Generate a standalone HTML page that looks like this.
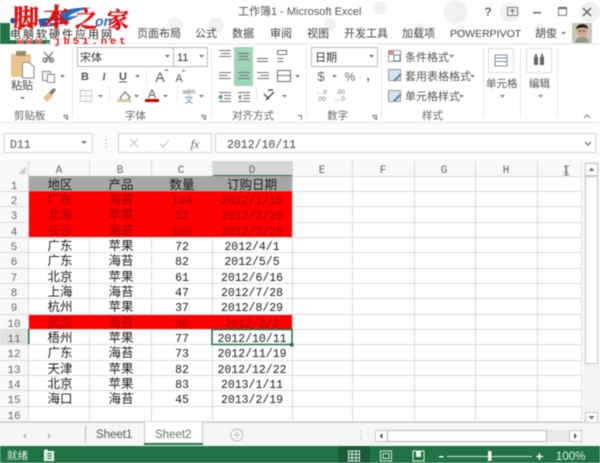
<!DOCTYPE html>
<html><head><meta charset="utf-8"><style>
html,body{margin:0;padding:0;width:600px;height:463px;overflow:hidden;background:#fff}
svg{display:block;filter:blur(.45px)}
text{font-family:"Liberation Sans","Noto Sans CJK SC",sans-serif;fill:#444;font-size:11px}
.t{font-size:11px;fill:#555}
.c{font-size:12.5px;fill:#1c1c1c;text-anchor:middle;font-family:"Liberation Mono","Noto Sans CJK SC",monospace}
.n{font-size:11.5px;fill:#1c1c1c;text-anchor:middle;font-family:"Liberation Mono","Noto Sans CJK SC",monospace}
.r{fill:#a00000}
.h{font-size:11px;fill:#666;text-anchor:middle;font-family:"Liberation Mono",monospace}
.m{text-anchor:middle}
.l{fill:none;stroke:#777;stroke-width:1}
.w{font-family:'Noto Serif CJK SC',serif;font-weight:700;fill:#e01010;stroke:#e01010;stroke-width:.5px}
</style></head><body>
<svg width="600" height="463" viewBox="0 0 600 463" xmlns="http://www.w3.org/2000/svg">
<rect width="600" height="463" fill="#fff"/>
<!-- title skull pattern -->
<g fill="#f1f1f1">
<circle cx="216" cy="25" r="8"/><circle cx="455" cy="12" r="12"/><circle cx="510" cy="12" r="10"/><circle cx="590" cy="12" r="10"/><circle cx="380" cy="8" r="7"/><circle cx="420" cy="28" r="5"/><circle cx="175" cy="25" r="8"/><circle cx="460" cy="30" r="5"/><circle cx="540" cy="28" r="5"/><circle cx="330" cy="24" r="6"/>
</g>
<!-- file tab -->
<rect x="0" y="23" width="50" height="21" fill="#217346"/>
<rect x="10" y="23" width="40" height="17" fill="#fff"/>
<rect x="50" y="43.500" width="550" height="1" fill="#e2e2e2"/>
<!-- tabs -->
<g class="t">
<text x="137" y="37">页面布局</text><text x="195" y="37">公式</text><text x="232" y="37">数据</text><text x="270" y="37">审阅</text><text x="307" y="37">视图</text><text x="344" y="37">开发工具</text><text x="402" y="37">加载项</text><text x="450" y="37" style="font-size:10.500px">POWERPIVOT</text><text x="535" y="37">胡俊</text>
</g>
<path d="M561 32h5l-2.500 2.500z" fill="#777"/>
<!-- avatar -->
<rect x="572" y="23" width="20" height="20" fill="#c9c5bb"/>
<path d="M575 43c1-5 3-6 7-6s6 1 7 6z" fill="#8d9a86"/>
<circle cx="582" cy="31" r="5.500" fill="#d3a98a"/>
<path d="M576 29c0-6 12-7 12 0-3-2-8-2-12 0z" fill="#222"/>
<path d="M579 31h2M583 31h2" stroke="#222"/>
<!-- title -->
<text x="238" y="15" style="font-size:11px;fill:#555">工作簿1 - Microsoft Excel</text>
<text x="488" y="16" class="m" style="font-size:12px;font-weight:bold;fill:#666">?</text>
<rect x="507.500" y="7.500" width="10" height="8" class="l"/><path d="M512.500 14v-4M510.500 11.500l2-2 2 2" class="l"/>
<rect x="533" y="12" width="8" height="1.500" fill="#666"/>
<rect x="558.500" y="7.500" width="8" height="8" class="l"/><rect x="558" y="7" width="9" height="2" fill="#666"/>
<path d="M583 8l8 8M591 8l-8 8" stroke="#666" stroke-width="1.500"/>
<!-- ribbon separators -->
<g stroke="#e6e6e6">
<path d="M72.500 47v71M211.500 47v71M306.500 47v71M381.500 47v71M483.500 47v71M520.500 47v71M557.500 47v71"/>
<path d="M146.500 71v15M109.500 86v15M177.500 86v15M256.500 86v15"/>
</g>
<!-- clipboard -->
<rect x="11" y="54" width="20" height="23" rx="1" fill="#e9c58d"/>
<rect x="16" y="51" width="10" height="5" fill="#9a8a6e"/>
<path d="M22.500 62.500h7l4.500 4.500v11h-11.500z" fill="#fff" stroke="#888"/>
<text x="11" y="89" style="font-size:11px">粘贴</text>
<path d="M20 97h5l-2.500 2.500z" fill="#777"/>
<path d="M44 52l8 9M53 52l-8 9" stroke="#666" stroke-width="1.200"/><circle cx="45" cy="60" r="2.200" fill="none" stroke="#555"/><circle cx="51.500" cy="60" r="2.200" fill="none" stroke="#555"/>
<rect x="42.500" y="71.500" width="8" height="9" fill="#f6f6f6" stroke="#8a8a8a"/><rect x="47.500" y="74.500" width="7" height="8" fill="#fff" stroke="#8a8a8a"/>
<path d="M60 75h5l-2.500 2.500z" fill="#777"/>
<path d="M43 98l6-6 4 4-6 6z" fill="#e3c488"/><path d="M49 92l5-4 2 2-4 5z" fill="#7a7a7a"/>
<text x="14" y="119" style="font-size:10.500px;fill:#666">剪贴板</text>
<path d="M63 115.500h4.500v4.500M64 116.500l3 3" class="l" stroke-width=".8"/>
<!-- font -->
<rect x="77.500" y="47.500" width="96" height="19" fill="#fff" stroke="#b5b5b5"/>
<rect x="173.500" y="47.500" width="34" height="19" fill="#fff" stroke="#b5b5b5"/>
<text x="80" y="61" style="font-size:11px;fill:#333">宋体</text>
<text x="177" y="61" style="font-size:11px;fill:#333">11</text>
<path d="M165 55h5l-2.500 2.500zM199 55h5l-2.500 2.500z" fill="#666"/>
<text x="85" y="80" class="m" style="font-size:11px;font-weight:bold;fill:#555">B</text>
<text x="104" y="80" class="m" style="font-size:11px;font-style:italic;font-family:'Liberation Serif',serif;font-weight:bold;fill:#666">I</text>
<text x="123" y="80" class="m" style="font-size:11px;font-weight:bold;fill:#555">U</text>
<rect x="119" y="81.500" width="8" height="1" fill="#555"/>
<path d="M135 75h5l-2.500 2.500z" fill="#777"/>
<text x="160" y="82" class="m" style="font-size:14px;fill:#555">A</text><text x="179" y="82" class="m" style="font-size:11px;fill:#555">A</text>
<path d="M165 71l1.500-1.500 1.500 1.500M182 70l1.500 1.500 1.500-1.500" class="l"/>
<path d="M80.500 90.500h11v11h-11zM86 90.500v11M80.500 96h11" fill="none" stroke="#aaa" stroke-dasharray="1.500 1"/>
<path d="M98 95h5l-2.500 2.500z" fill="#777"/>
<path d="M120 98l5-6 5 5-3 3h-5z" fill="#fff" stroke="#666"/><rect x="117" y="99" width="14" height="3" fill="#cfc8a0"/>
<path d="M134 95h5l-2.500 2.500z" fill="#777"/>
<text x="152" y="98" class="m" style="font-size:12px;fill:#555">A</text><rect x="145" y="99" width="14" height="3" fill="#c00000"/>
<path d="M163 95h5l-2.500 2.500z" fill="#777"/>
<text x="189" y="94" class="m" style="font-size:7px;fill:#666">wén</text><text x="189" y="103" class="m" style="font-size:9px;fill:#5a7fa8">文</text>
<path d="M199 95h5l-2.500 2.500z" fill="#777"/>
<text x="125" y="119" style="font-size:10.500px;fill:#666">字体</text>
<path d="M201 115.500h4.500v4.500M202 116.500l3 3" class="l" stroke-width=".8"/>
<!-- alignment -->
<rect x="234" y="47" width="19" height="39" fill="#9fd4b6"/>
<g stroke="#6f6f6f" fill="none">
<path d="M219 50.500h12M221 53.500h9M219 56.500h12"/>
<path d="M238 53.500h11M239 56.500h9M238 59.500h11"/>
<path d="M257 58.500h11M257 61.500h11"/>
<path d="M219 72.500h12M219 75.500h9M219 78.500h12"/>
<path d="M238 72.500h12M240 75.500h8M238 78.500h12"/>
<path d="M257 72.500h12M260 75.500h9M257 78.500h12"/>
<path d="M219 92.500h12M224 95.500h7M224 98.500h7M219 101.500h12"/>
<path d="M238 92.500h12M243 95.500h7M243 98.500h7M238 101.500h12"/>
<path d="M277.500 50.500h9v4h-9zM277.500 58.500h6M277.500 61.500h6"/>
<path d="M277.500 70.500h13v11h-13zM277.500 75.500h13"/>
</g>
<path d="M218 97l4-3v6zM241 94v6l-3-3z" fill="#5a85ad"/>
<path d="M295 75h5l-2.500 2.500zM282 95h5l-2.500 2.500z" fill="#777"/>
<path d="M266 100l8-8M268 90l5 0M264 94l5 5" stroke="#555" fill="none" stroke-width="1.500"/>
<text x="232" y="119" style="font-size:10.500px;fill:#666">对齐方式</text>
<path d="M298 115.500h3.500v4.500" class="l" stroke-width=".8"/>
<!-- number -->
<rect x="311.500" y="47.500" width="66" height="19" fill="#fff" stroke="#b5b5b5"/>
<text x="315" y="61" style="font-size:11px;fill:#333">日期</text>
<path d="M369 55h5l-2.500 2.500z" fill="#666"/>
<text x="321" y="81" class="m" style="font-size:13px;fill:#666">$</text>
<path d="M332 75h5l-2.500 2.500z" fill="#777"/>
<text x="350" y="81" class="m" style="font-size:12px;fill:#666">%</text>
<text x="368" y="80" class="m" style="font-size:12px;font-weight:bold;fill:#555">,</text>
<text x="315" y="94" style="font-size:6.500px;fill:#777">←.0</text><text x="317" y="101" style="font-size:6.500px;fill:#777">.00</text>
<text x="336" y="94" style="font-size:6.500px;fill:#777">.00</text><text x="333" y="101" style="font-size:6.500px;fill:#777">→.0</text>
<text x="327" y="119" style="font-size:10.500px;fill:#666">数字</text>
<path d="M372 115.500h4.500v4.500M373 116.500l3 3" class="l" stroke-width=".8"/>
<!-- styles -->
<rect x="388.500" y="50.500" width="12" height="11" fill="#fff" stroke="#9a9a9a"/><rect x="389" y="51" width="5" height="4" fill="#d48a8a"/><rect x="394" y="55" width="6" height="6" fill="#fff" stroke="#5a7fa8"/>
<rect x="388.500" y="69.500" width="12" height="11" fill="#d7e4ef" stroke="#9a9a9a"/><path d="M394 81l7-7" stroke="#5a85ad" stroke-width="2"/>
<rect x="388.500" y="90.500" width="12" height="11" fill="#d7e4ef" stroke="#9a9a9a"/><path d="M394 101l7-7" stroke="#5a85ad" stroke-width="2"/>
<text x="405" y="61" style="font-size:11px;fill:#555">条件格式</text>
<text x="405" y="80" style="font-size:11px;fill:#555">套用表格格式</text>
<text x="405" y="100" style="font-size:11px;fill:#555">单元格样式</text>
<path d="M449 55h5l-2.500 2.500zM470 75h5l-2.500 2.500zM459 95h5l-2.500 2.500z" fill="#777"/>
<text x="422" y="119" style="font-size:10.500px;fill:#666">样式</text>
<!-- cells/edit -->
<rect x="488.500" y="48.500" width="25" height="24" fill="#fff" stroke="#dcdcdc"/>
<rect x="526.500" y="48.500" width="25" height="24" fill="#fff" stroke="#dcdcdc"/>
<path d="M495 55h12v11h-12zM495 58h12M495 61.500h12" fill="none" stroke="#7b8da0"/>
<rect x="534" y="57" width="4" height="8" fill="#666"/><rect x="540" y="57" width="4" height="8" fill="#666"/><rect x="535" y="54" width="2" height="4" fill="#666"/><rect x="541" y="54" width="2" height="4" fill="#666"/>
<text x="486" y="87" style="font-size:10.500px;fill:#555">单元格</text>
<text x="529" y="87" style="font-size:10.500px;fill:#555">编辑</text>
<path d="M500 95h5l-2.500 2.500zM538 95h5l-2.500 2.500z" fill="#777"/>
<path d="M584 118l3-3 3 3" class="l"/>
<rect x="0" y="122" width="600" height="1" fill="#e2e2e2"/>
<!-- formula bar -->
<rect x="0" y="123" width="600" height="38" fill="#fbfbfb"/>
<rect x="4.500" y="133.500" width="88" height="19" fill="#fff" stroke="#d2d2d2"/>
<rect x="118.500" y="133.500" width="93" height="19" fill="#fff" stroke="#d2d2d2"/>
<rect x="215.500" y="133.500" width="380" height="19" fill="#fff" stroke="#d2d2d2"/>
<text x="10" y="148" style="font-family:'Liberation Mono',monospace;font-size:11.500px;fill:#555">D11</text>
<path d="M81 141h6l-3 3z" fill="#777"/>
<path d="M106 139.500v1M106 143v1M106 146.500v1" stroke="#888"/>
<path d="M130 139l8 8M138 139l-8 8" stroke="#ccc" stroke-width="1.300"/>
<path d="M160 144l3 3 6-7" fill="none" stroke="#ccc" stroke-width="1.300"/>
<text x="195" y="148" class="m" style="font-family:'Liberation Serif',serif;font-style:italic;font-size:12px;fill:#666">fx</text>
<text x="227" y="148" style="font-family:'Liberation Mono',monospace;font-size:11.500px;fill:#444">2012/10/11</text>
<path d="M585 142l3 3 3-3" fill="none" stroke="#666" stroke-width="1.200"/>
<!-- sheet -->
<rect x="0" y="161" width="582" height="261" fill="#fff"/>
<rect x="0" y="161" width="581" height="15" fill="#f8f8f8"/>
<rect x="0" y="176" width="28" height="246" fill="#f8f8f8"/>
<rect x="212" y="161" width="80" height="15" fill="#d6d6d6"/>
<rect x="212" y="175" width="80" height="1.500" fill="#217346"/>
<rect x="0" y="329" width="28" height="15.300" fill="#e1e1e1"/>
<path d="M26 166v8h-8z" fill="#cfcfcf"/>
<!-- fills -->
<rect x="29" y="176" width="263" height="15.400" fill="#a6a6a6"/>
<rect x="29" y="191.300" width="263" height="46" fill="#fe0000"/>
<rect x="29" y="314" width="263" height="15.300" fill="#fe0000"/>
<!-- grid -->
<g stroke="#dadada">
<path d="M0 191.500h29M0 206.500h29M0 222.500h29M0 237.500h582M0 252.500h582M0 268.500h582M0 283.500h582M0 298.500h582M0 314.500h582M0 329.500h582M0 344.500h582M0 360.500h582M0 375.500h582M0 390.500h582M0 406.500h582M0 421.500h582"/>
<path d="M292 176.500h290M292 191.500h290M292 206.500h290M292 222.500h290"/>
<path d="M89.500 161v15M151.500 161v15M212.500 161v15M89.500 237v77M151.500 237v77M212.500 237v77M89.500 329v93M151.500 329v93M212.500 329v93M292.500 161v261M352.500 161v261M414.500 161v261M475.500 161v261M537.500 161v261M581.500 161v261M28.500 161v261"/>
</g>
<rect x="28" y="329" width="1.500" height="15.300" fill="#217346"/>
<!-- headers -->
<g class="h">
<text class="h" x="59" y="173">A</text><text class="h" x="120" y="173">B</text><text class="h" x="181" y="173">C</text><text class="h" x="252" y="173">D</text><text class="h" x="322" y="173">E</text><text class="h" x="383" y="173">F</text><text class="h" x="444" y="173">G</text><text class="h" x="506" y="173">H</text><text class="h" x="566" y="173">I</text>
<text class="h" x="14" y="189">1</text><text class="h" x="14" y="204">2</text><text class="h" x="14" y="219">3</text><text class="h" x="14" y="235">4</text><text class="h" x="14" y="250">5</text><text class="h" x="14" y="265">6</text><text class="h" x="14" y="281">7</text><text class="h" x="14" y="296">8</text><text class="h" x="14" y="311">9</text><text class="h" x="14" y="327">10</text><text class="h" x="14" y="342">11</text><text class="h" x="14" y="357">12</text><text class="h" x="14" y="373">13</text><text class="h" x="14" y="388">14</text><text class="h" x="14" y="403">15</text><text class="h" x="14" y="419">16</text>
</g>
<!-- rows -->
<text class="c" x="60" y="189">地区</text><text class="c" x="121" y="189">产品</text><text class="c" x="182" y="189">数量</text><text class="c" x="252" y="189">订购日期</text>
<text class="c r" x="60" y="204">广东</text><text class="c r" x="121" y="204">海苔</text><text class="n r" x="182" y="204">104</text><text class="n r" x="252" y="204">2012/1/10</text>
<text class="c r" x="60" y="219">北海</text><text class="c r" x="121" y="219">苹果</text><text class="n r" x="182" y="219">52</text><text class="n r" x="252" y="219">2012/2/20</text>
<text class="c r" x="60" y="235">长沙</text><text class="c r" x="121" y="235">海苔</text><text class="n r" x="182" y="235">100</text><text class="n r" x="252" y="235">2012/3/25</text>
<text class="c" x="60" y="250">广东</text><text class="c" x="121" y="250">苹果</text><text class="n" x="182" y="250">72</text><text class="n" x="252" y="250">2012/4/1</text>
<text class="c" x="60" y="265">广东</text><text class="c" x="121" y="265">海苔</text><text class="n" x="182" y="265">82</text><text class="n" x="252" y="265">2012/5/5</text>
<text class="c" x="60" y="281">北京</text><text class="c" x="121" y="281">苹果</text><text class="n" x="182" y="281">61</text><text class="n" x="252" y="281">2012/6/16</text>
<text class="c" x="60" y="296">上海</text><text class="c" x="121" y="296">海苔</text><text class="n" x="182" y="296">47</text><text class="n" x="252" y="296">2012/7/28</text>
<text class="c" x="60" y="311">杭州</text><text class="c" x="121" y="311">苹果</text><text class="n" x="182" y="311">37</text><text class="n" x="252" y="311">2012/8/29</text>
<text class="c r" x="60" y="327">武汉</text><text class="c r" x="121" y="327">海苔</text><text class="n r" x="182" y="327">86</text><text class="n r" x="252" y="327">2012/2/2</text>
<text class="c" x="60" y="342">梧州</text><text class="c" x="121" y="342">苹果</text><text class="n" x="182" y="342">77</text><text class="n" x="252" y="342">2012/10/11</text>
<text class="c" x="60" y="357">广东</text><text class="c" x="121" y="357">海苔</text><text class="n" x="182" y="357">73</text><text class="n" x="252" y="357">2012/11/19</text>
<text class="c" x="60" y="373">天津</text><text class="c" x="121" y="373">苹果</text><text class="n" x="182" y="373">82</text><text class="n" x="252" y="373">2012/12/22</text>
<text class="c" x="60" y="388">北京</text><text class="c" x="121" y="388">苹果</text><text class="n" x="182" y="388">83</text><text class="n" x="252" y="388">2013/1/11</text>
<text class="c" x="60" y="403">海口</text><text class="c" x="121" y="403">海苔</text><text class="n" x="182" y="403">45</text><text class="n" x="252" y="403">2013/2/19</text>
<!-- selection -->
<rect x="212" y="329.500" width="80" height="15" fill="none" stroke="#217346" stroke-width="1.500"/>
<rect x="290" y="343" width="3.500" height="3.500" fill="#217346"/>
<!-- I-beam -->
<path d="M564 166h5M564 175h5M566.500 166v9" stroke="#777" fill="none" stroke-width="1"/>
<!-- vertical scrollbar -->
<rect x="583" y="161" width="17" height="262" fill="#f3f3f3"/>
<rect x="585.500" y="163.500" width="12" height="12" fill="#fff" stroke="#c4c4c4"/>
<path d="M588.500 171l3-3.500 3 3.500z" fill="#777"/>
<rect x="585.500" y="176.500" width="12" height="187" fill="#fff" stroke="#c4c4c4"/>
<rect x="585.500" y="412.500" width="12" height="10" fill="#fff" stroke="#c4c4c4"/>
<path d="M588.500 416l3 3.500 3-3.500z" fill="#777"/>
<!-- sheet tabs -->
<rect x="0" y="422" width="600" height="25" fill="#f6f6f6"/>
<rect x="0" y="422" width="600" height="1" fill="#cfcfcf"/>
<path d="M26 433v6l-3-3zM48 433v6l3-3z" fill="#bdbdbd"/>
<rect x="85" y="426" width="1" height="17" fill="#b5b5b5"/>
<text x="96" y="438" style="font-size:11.500px;fill:#555">Sheet1</text>
<rect x="144" y="422" width="59" height="23" fill="#fff"/>
<path d="M144.500 422v22M202.500 422v22" stroke="#c5c5c5"/>
<rect x="144" y="443" width="59" height="2" fill="#217346"/>
<text x="155" y="438" style="font-size:11.500px;fill:#58775f">Sheet2</text>
<circle cx="237" cy="435" r="6" fill="none" stroke="#bcbcbc"/>
<path d="M233.500 435h7M237 431.500v7" stroke="#bcbcbc"/>
<path d="M361 431v1M361 435v1M361 438v1" stroke="#999"/>
<rect x="375" y="430" width="207" height="12" fill="#e9e9e9"/>
<rect x="375.500" y="430.500" width="12" height="11" fill="#fff" stroke="#c6c6c6"/>
<rect x="387.500" y="430.500" width="159" height="11" fill="#fff" stroke="#b9b9b9"/>
<rect x="569.500" y="430.500" width="12" height="11" fill="#fff" stroke="#c6c6c6"/>
<path d="M382.500 433v6l-3-3zM574 433v6l3-3z" fill="#555"/>
<!-- status -->
<rect x="0" y="446" width="600" height="17" fill="#217346"/>
<rect x="338" y="446" width="32" height="17" fill="#1a5c38"/>
<text x="7" y="459" style="font-size:10.500px;fill:#e3eee8">就绪</text>
<rect x="44.500" y="451.500" width="9" height="9" fill="#d4e4da" stroke="#fff"/>
<path d="M44.500 449.500h3v2h-3z" fill="#fff"/>
<path d="M47.500 453.500h4M47.500 456h4M47.500 458.500h4" stroke="#217346"/>
<path d="M348.500 451h11v10h-11zM348.500 454.300h11M348.500 457.700h11M352 451v10M356 451v10" fill="none" stroke="#e6f0ea"/>
<path d="M380.500 451h11v10h-11zM383 453.500h6v5h-6z" fill="none" stroke="#d4e4da"/>
<rect x="413" y="451" width="11" height="10" fill="none" stroke="#e6f0ea"/><rect x="416" y="451" width="5" height="6" fill="#e6f0ea"/>
<rect x="439" y="456" width="4.500" height="1.500" fill="#f3f7f5"/>
<rect x="447" y="456" width="85" height="1" fill="#d4e4da"/>
<rect x="488" y="451" width="3.500" height="10" fill="#f2f6f4"/>
<path d="M536 456.500h7M539.500 453v7" stroke="#f3f7f5" stroke-width="1.500"/>
<text x="556" y="460" style="font-size:11.500px;fill:#e6f0ea">100%</text>
<!-- watermark -->
<path d="M10 20c2-3 4-3 5 0 1 3-2 4-4 3z" fill="#1f4fa8"/>
<path d="M62 11c10-3 22-4 30-3-9 1-20 5-24 9l12-2-14 7-7-1c3-4 0-8 3-10z" fill="#2a6cb5"/>
<path d="M38 19c8-1 20-2 28-1l-2 2-17 1-1 4 10-1-1 2-15 1z" fill="#2d5c9e"/>
<text x="95" y="26" style="font-style:italic;font-weight:bold;font-size:14px;fill:#2a6cb5">on</text>
<text class="w" x="13" y="28" style="font-size:26px">脚</text>
<text class="w" x="43" y="28" style="font-size:27px">本</text>
<text class="w" x="75" y="27" style="font-size:23px">之</text>
<text class="w" x="107" y="28" style="font-size:22px">家</text>
<text x="10" y="38" style="font-size:11px;fill:#222;letter-spacing:2px;stroke:#fff;stroke-width:1.500px;paint-order:stroke">电脑软硬件应用网</text>
<text x="17" y="44" style="font-family:'Liberation Mono',monospace;font-size:10.500px;fill:#e01010;letter-spacing:3px;font-weight:bold;stroke:#fff;stroke-width:1px;paint-order:stroke">www.jb51.net</text>
</svg>
</body></html>
